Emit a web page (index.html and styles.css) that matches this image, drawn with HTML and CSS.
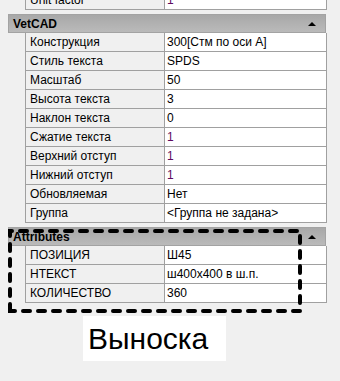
FILE: index.html
```html
<!DOCTYPE html>
<html>
<head>
<meta charset="utf-8">
<link rel="stylesheet" href="styles.css">
</head>
<body>
<div class="page">
  <div class="grid">
    <div class="section first">
      <div class="row"><div class="name">Unit factor</div><div class="val mod">1</div></div>
    </div>
    <div class="section">
      <div class="head"><span>VetCAD</span><i class="tri"></i></div>
      <div class="row"><div class="name">Конструкция</div><div class="val">300[Стм по оси А]</div></div>
      <div class="row"><div class="name">Стиль текста</div><div class="val">SPDS</div></div>
      <div class="row"><div class="name">Масштаб</div><div class="val">50</div></div>
      <div class="row"><div class="name">Высота текста</div><div class="val">3</div></div>
      <div class="row"><div class="name">Наклон текста</div><div class="val">0</div></div>
      <div class="row"><div class="name">Сжатие текста</div><div class="val mod">1</div></div>
      <div class="row"><div class="name">Верхний отступ</div><div class="val mod">1</div></div>
      <div class="row"><div class="name">Нижний отступ</div><div class="val mod">1</div></div>
      <div class="row"><div class="name">Обновляемая</div><div class="val">Нет</div></div>
      <div class="row"><div class="name">Группа</div><div class="val">&lt;Группа не задана&gt;</div></div>
    </div>
    <div class="section">
      <div class="head"><span>Attributes</span><i class="tri"></i></div>
      <div class="row"><div class="name">ПОЗИЦИЯ</div><div class="val">Ш45</div></div>
      <div class="row"><div class="name">НТЕКСТ</div><div class="val">ш400х400 в ш.п.</div></div>
      <div class="row"><div class="name">КОЛИЧЕСТВО</div><div class="val">360</div></div>
    </div>
  </div>
  <div class="caption"><span>Выноска</span></div>
  <svg class="outline" width="340" height="381" viewBox="0 0 340 381">
    <path d="M10 311 L10 231 L300 231 L300 311 Z" fill="none" stroke="#000" stroke-width="4" stroke-linecap="round" stroke-dasharray="7 8"/>
  </svg>
</div>
</body>
</html>
```
FILE: styles.css
```css
html, body {
  margin: 0;
  padding: 0;
  background: #f0f0f0;
}
body {
  width: 340px;
  height: 381px;
  overflow: hidden;
  font-family: "Liberation Sans", Arial, sans-serif;
  font-size: 12px;
  color: #000;
}
.page {
  position: relative;
  width: 340px;
  height: 381px;
}
.grid {
  margin-left: 8px;
  width: 319px;
  display: flex;
  flex-direction: column;
  gap: 4px;
}
.section {
  display: flex;
  flex-direction: column;
}
.section.first {
  margin-top: -9px;
}
.head {
  height: 19px;
  box-sizing: border-box;
  width: 318px;
  background: linear-gradient(#a8a8a8, #bababa);
  border: 1px solid #a3a3a3;
  display: flex;
  align-items: center;
  justify-content: space-between;
  padding: 0 9px 0 4px;
  font-weight: bold;
  font-size: 12px;
}
.tri {
  width: 0;
  height: 0;
  border-left: 4px solid transparent;
  border-right: 4px solid transparent;
  border-bottom: 4px solid #000;
}
.row {
  margin-left: 17px;
  display: grid;
  grid-template-columns: 139px 163px;
  height: 19px;
}
.name, .val {
  box-sizing: border-box;
  border-left: 1px solid #a0a0a0;
  border-bottom: 1px solid #a0a0a0;
  line-height: 18px;
  white-space: nowrap;
  overflow: hidden;
}
.name {
  background: #f0f0f0;
  padding-left: 4px;
}
.val {
  background: #fff;
  border-right: 1px solid #a0a0a0;
  padding-left: 2px;
}
.val.mod {
  color: #5e0b5e;
}
.caption {
  margin: 13px 0 0 83px;
  width: 143px;
  height: 45px;
  background: #fff;
  display: flex;
  align-items: center;
}
.caption span {
  font-family: "Liberation Sans", Arial, sans-serif;
  font-size: 30px;
  padding-left: 5px;
  line-height: 1;
}
.outline {
  position: absolute;
  left: 0;
  top: 0;
  pointer-events: none;
}
```
